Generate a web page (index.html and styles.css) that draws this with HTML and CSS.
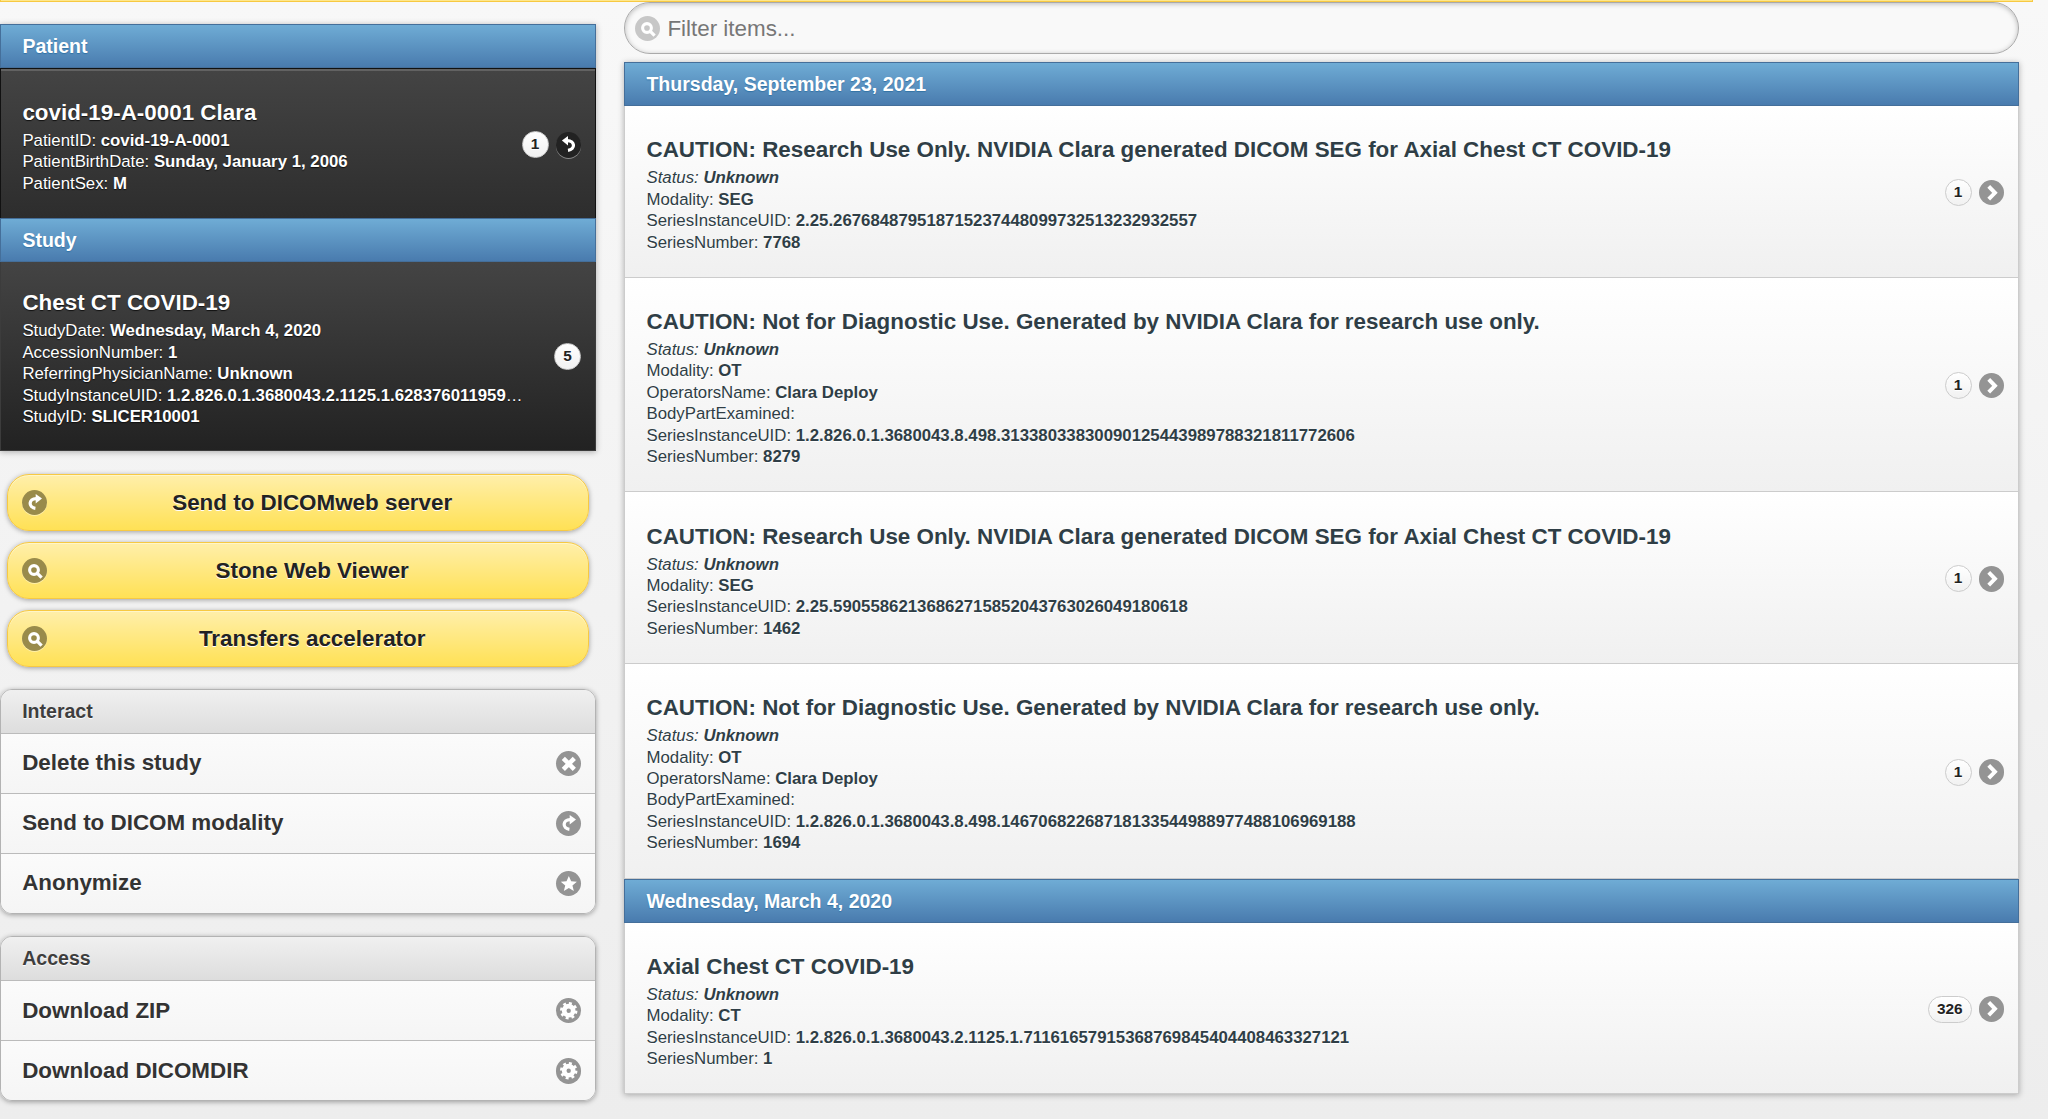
FILE: index.html
```
<!DOCTYPE html>
<html lang="en">
<head>
<meta charset="utf-8">
<title>Chest CT COVID-19</title>
<link rel="stylesheet" href="styles.css">
</head>
<body>
<svg class="defs" aria-hidden="true">
  <symbol id="i-arrow-r" viewBox="0 0 18 18"><path d="M6.900 4.600 11.300 9.100l-4.400 4.500" fill="none" stroke="#fff" stroke-width="2.800"/></symbol>
  <symbol id="i-search" viewBox="0 0 18 18"><circle cx="8.500" cy="8.500" r="3.100" fill="none" stroke="#fff" stroke-width="2.200"/><path d="m10.900 10.900 3 3" fill="none" stroke="#fff" stroke-width="2.300"/></symbol>
  <symbol id="i-forward" viewBox="0 0 18 18"><path d="M9.500 13C4.300 12.300 4.600 6.100 10 6.100" fill="none" stroke="#fff" stroke-width="2.300"/><path d="M9.700 2.900 14.200 6.100 9.700 9.600z" fill="#fff"/></symbol>
  <symbol id="i-back" viewBox="0 0 18 18"><path d="M8.500 13C13.900 12.300 13.600 6.100 8 6.100" fill="none" stroke="#fff" stroke-width="2.300"/><path d="M8.500 2.800 4.200 6.100 8.500 9.600z" fill="#fff"/></symbol>
  <symbol id="i-delete" viewBox="0 0 18 18"><path d="m5.200 5.200 7.800 7.800m0-7.800-7.800 7.800" fill="none" stroke="#fff" stroke-width="3.200"/></symbol>
  <symbol id="i-star" viewBox="0 0 18 18"><path d="m9.100 3.500 1.650 3.800 4.050.3-3.150 2.600 1 4L9.100 12l-3.550 2.200 1-4L3.400 7.600l4.050-.3z" fill="#fff"/></symbol>
  <symbol id="i-gear" viewBox="0 0 18 18"><circle cx="9" cy="9" r="3.200" fill="none" stroke="#fff" stroke-width="3.300"/><circle cx="9" cy="9" r="5.200" fill="none" stroke="#fff" stroke-width="2" stroke-dasharray="2.042"/></symbol>
</svg>
<div class="topbar"></div>
<main class="page">
  <aside class="side">
    <section class="card">
      <h2 class="divider">Patient</h2>
      <div class="info patient">
        <div class="text">
          <h3>covid-19-A-0001 Clara</h3>
          <p>PatientID: <b>covid-19-A-0001</b></p>
          <p>PatientBirthDate: <b>Sunday, January 1, 2006</b></p>
          <p>PatientSex: <b>M</b></p>
        </div>
        <span class="count">1</span>
        <svg class="icon black"><use href="#i-back"/></svg>
      </div>
      <h2 class="divider">Study</h2>
      <div class="info study">
        <div class="text">
          <h3>Chest CT COVID-19</h3>
          <p>StudyDate: <b>Wednesday, March 4, 2020</b></p>
          <p>AccessionNumber: <b>1</b></p>
          <p>ReferringPhysicianName: <b>Unknown</b></p>
          <p>StudyInstanceUID: <b>1.2.826.0.1.3680043.2.1125.1.628376011959</b>…</p>
          <p>StudyID: <b>SLICER10001</b></p>
        </div>
        <span class="count">5</span>
      </div>
    </section>
    <nav class="buttons">
      <a class="button"><svg class="icon olive"><use href="#i-forward"/></svg><span>Send to DICOMweb server</span></a>
      <a class="button"><svg class="icon olive"><use href="#i-search"/></svg><span>Stone Web Viewer</span></a>
      <a class="button"><svg class="icon olive"><use href="#i-search"/></svg><span>Transfers accelerator</span></a>
    </nav>
    <section class="menu">
      <h2>Interact</h2>
      <a>Delete this study<svg class="icon"><use href="#i-delete"/></svg></a>
      <a>Send to DICOM modality<svg class="icon"><use href="#i-forward"/></svg></a>
      <a>Anonymize<svg class="icon"><use href="#i-star"/></svg></a>
    </section>
    <section class="menu">
      <h2>Access</h2>
      <a>Download ZIP<svg class="icon"><use href="#i-gear"/></svg></a>
      <a>Download DICOMDIR<svg class="icon"><use href="#i-gear"/></svg></a>
    </section>
  </aside>
  <section class="content">
    <label class="filter"><svg class="icon pale"><use href="#i-search"/></svg><span>Filter items...</span></label>
    <div class="series">
      <h2 class="divider">Thursday, September 23, 2021</h2>
      <a class="item">
        <div class="text">
          <h3>CAUTION: Research Use Only. NVIDIA Clara generated DICOM SEG for Axial Chest CT COVID-19</h3>
          <p><i>Status: <b>Unknown</b></i></p>
          <p>Modality: <b>SEG</b></p>
          <p>SeriesInstanceUID: <b>2.25.267684879518715237448099732513232932557</b></p>
          <p>SeriesNumber: <b>7768</b></p>
        </div>
        <span class="count">1</span><svg class="icon"><use href="#i-arrow-r"/></svg>
      </a>
      <a class="item">
        <div class="text">
          <h3>CAUTION: Not for Diagnostic Use. Generated by NVIDIA Clara for research use only.</h3>
          <p><i>Status: <b>Unknown</b></i></p>
          <p>Modality: <b>OT</b></p>
          <p>OperatorsName: <b>Clara Deploy</b></p>
          <p>BodyPartExamined:</p>
          <p>SeriesInstanceUID: <b>1.2.826.0.1.3680043.8.498.31338033830090125443989788321811772606</b></p>
          <p>SeriesNumber: <b>8279</b></p>
        </div>
        <span class="count">1</span><svg class="icon"><use href="#i-arrow-r"/></svg>
      </a>
      <a class="item">
        <div class="text">
          <h3>CAUTION: Research Use Only. NVIDIA Clara generated DICOM SEG for Axial Chest CT COVID-19</h3>
          <p><i>Status: <b>Unknown</b></i></p>
          <p>Modality: <b>SEG</b></p>
          <p>SeriesInstanceUID: <b>2.25.59055862136862715852043763026049180618</b></p>
          <p>SeriesNumber: <b>1462</b></p>
        </div>
        <span class="count">1</span><svg class="icon"><use href="#i-arrow-r"/></svg>
      </a>
      <a class="item">
        <div class="text">
          <h3>CAUTION: Not for Diagnostic Use. Generated by NVIDIA Clara for research use only.</h3>
          <p><i>Status: <b>Unknown</b></i></p>
          <p>Modality: <b>OT</b></p>
          <p>OperatorsName: <b>Clara Deploy</b></p>
          <p>BodyPartExamined:</p>
          <p>SeriesInstanceUID: <b>1.2.826.0.1.3680043.8.498.14670682268718133544988977488106969188</b></p>
          <p>SeriesNumber: <b>1694</b></p>
        </div>
        <span class="count">1</span><svg class="icon"><use href="#i-arrow-r"/></svg>
      </a>
      <h2 class="divider">Wednesday, March 4, 2020</h2>
      <a class="item">
        <div class="text">
          <h3>Axial Chest CT COVID-19</h3>
          <p><i>Status: <b>Unknown</b></i></p>
          <p>Modality: <b>CT</b></p>
          <p>SeriesInstanceUID: <b>1.2.826.0.1.3680043.2.1125.1.71161657915368769845404408463327121</b></p>
          <p>SeriesNumber: <b>1</b></p>
        </div>
        <span class="count">326</span><svg class="icon"><use href="#i-arrow-r"/></svg>
      </a>
    </div>
  </section>
</main>
</body>
</html>
```
FILE: styles.css
```
* { box-sizing: border-box; margin: 0; }
body {
  height: 1119px;
  overflow: hidden;
  font: 22.4px "Liberation Sans", Arial, sans-serif;
  color: #333;
  background: linear-gradient(#f8f8f8, #ededed);
}
.defs { display: none; }
.topbar {
  width: 2033px;
  height: 2px;
  background: #fee78c;
  border: 1px solid #f7c942;
  border-top: 0;
}
.page { display: flex; gap: 28px; }
.side { width: 596px; padding-top: 22.4px; }

.card, .series { box-shadow: 0 1px 6px rgba(0, 0, 0, .3); }
.divider {
  height: 44px;
  padding-left: 21.4px;
  font-size: 19.55px;
  line-height: 43px;
  color: #fff;
  text-shadow: 0 1px 1px #3373a5;
  border: 1px solid #456f9a;
  background: linear-gradient(#6facd5, #497bae);
}
.text { flex: 1; min-width: 0; white-space: nowrap; }
.text h3 { font-size: 22.4px; line-height: 26px; margin-bottom: 4px; }
.text p { font-size: 16.8px; line-height: 21.4px; }
.info {
  display: flex;
  align-items: center;
  padding: 0 14px 0 21.4px;
  color: #fff;
  text-shadow: 0 1px 1px #111;
}
.info .text { align-self: flex-start; }
.patient {
  height: 150px;
  padding-top: 2px;
  border: 1px solid #111;
  border-bottom: 0;
  box-shadow: inset 0 2px #626262;
  background: linear-gradient(#444, #2d2d2d);
}
.patient .text { padding-top: 28.6px; }
.study { height: 189px; border: 1px solid #3c3c3c; border-top: 0; background: linear-gradient(#444, #222); }
.study .text { padding-top: 28px; }

.count {
  flex: none;
  min-width: 27px;
  height: 27px;
  padding: 0 8px;
  border: 1px solid #ccc;
  border-radius: 14px;
  font-size: 15.4px;
  font-weight: bold;
  line-height: 24px;
  text-align: center;
  color: #222;
  text-shadow: 0 1px 0 #fff;
  background: linear-gradient(#fff, #f1f1f1);
}
.icon {
  flex: none;
  width: 25.4px;
  height: 25.4px;
  border-radius: 50%;
  background: #949494;
}
.count + .icon { margin-left: 7px; }
.icon.black { background: #222; box-shadow: 0 1px 0 rgba(255, 255, 255, .4); }
.icon.olive { background: #998b4b; box-shadow: 0 1px 0 rgba(255, 255, 255, .4); }
.icon.pale { background: #c7c7c7; }

.buttons {
  display: flex;
  flex-direction: column;
  gap: 11.2px;
  padding: 22.4px 7px 0;
}
.button {
  display: flex;
  align-items: center;
  height: 56.8px;
  padding: 1px 27px 0 14px;
  border: 1px solid #f7c942;
  border-radius: 22px;
  font-weight: bold;
  color: #222;
  text-shadow: 0 1px 0 #fff;
  box-shadow: 0 1px 5px rgba(0, 0, 0, .35), inset 0 1px #fff6c8;
  background: linear-gradient(#ffefaa, #ffe155);
}
.button span { flex: 1; text-align: center; padding-left: 16px; }

.menu {
  margin: 22.2px 0 0;
  border: 1px solid #b3b3b3;
  border-radius: 12px;
  box-shadow: 0 1px 5px rgba(0, 0, 0, .35);
  overflow: hidden;
}
.menu h2 {
  height: 43px;
  padding-left: 21.2px;
  font-size: 19.55px;
  line-height: 42px;
  color: #3e3e3e;
  text-shadow: 0 1px 1px #fff;
  background: linear-gradient(#f0f0f0, #ddd);
}
.menu a {
  display: flex;
  align-items: center;
  justify-content: space-between;
  height: 60.1px;
  padding: 0 14px 0 21.2px;
  border-top: 1px solid #bbb;
  font-weight: bold;
  text-shadow: 0 1px 0 #fff;
  background: linear-gradient(#fbfbfb, #f5f5f5);
}

.content { width: 1395px; }
.filter {
  display: flex;
  align-items: center;
  height: 52px;
  padding: 1px 10px 0;
  border: 1px solid #aaa;
  border-radius: 28px;
  color: #777;
  background: #f9f9f9;
  box-shadow: inset 0 1px 5px rgba(0, 0, 0, .25);
}
.filter span { padding-left: 7px; }
.series { margin-top: 8px; }
.item {
  display: flex;
  align-items: center;
  padding: 0 14px 23.8px 21.5px;
  border: 1px solid #ccc;
  border-top: 0;
  color: #2f3e46;
  text-shadow: 0 1px 0 #fff;
  background: linear-gradient(#fff, #f0f0f0);
}
.item .text { padding-top: 31.3px; }
.item .count, .item .icon { position: relative; top: 13.2px; }
```
